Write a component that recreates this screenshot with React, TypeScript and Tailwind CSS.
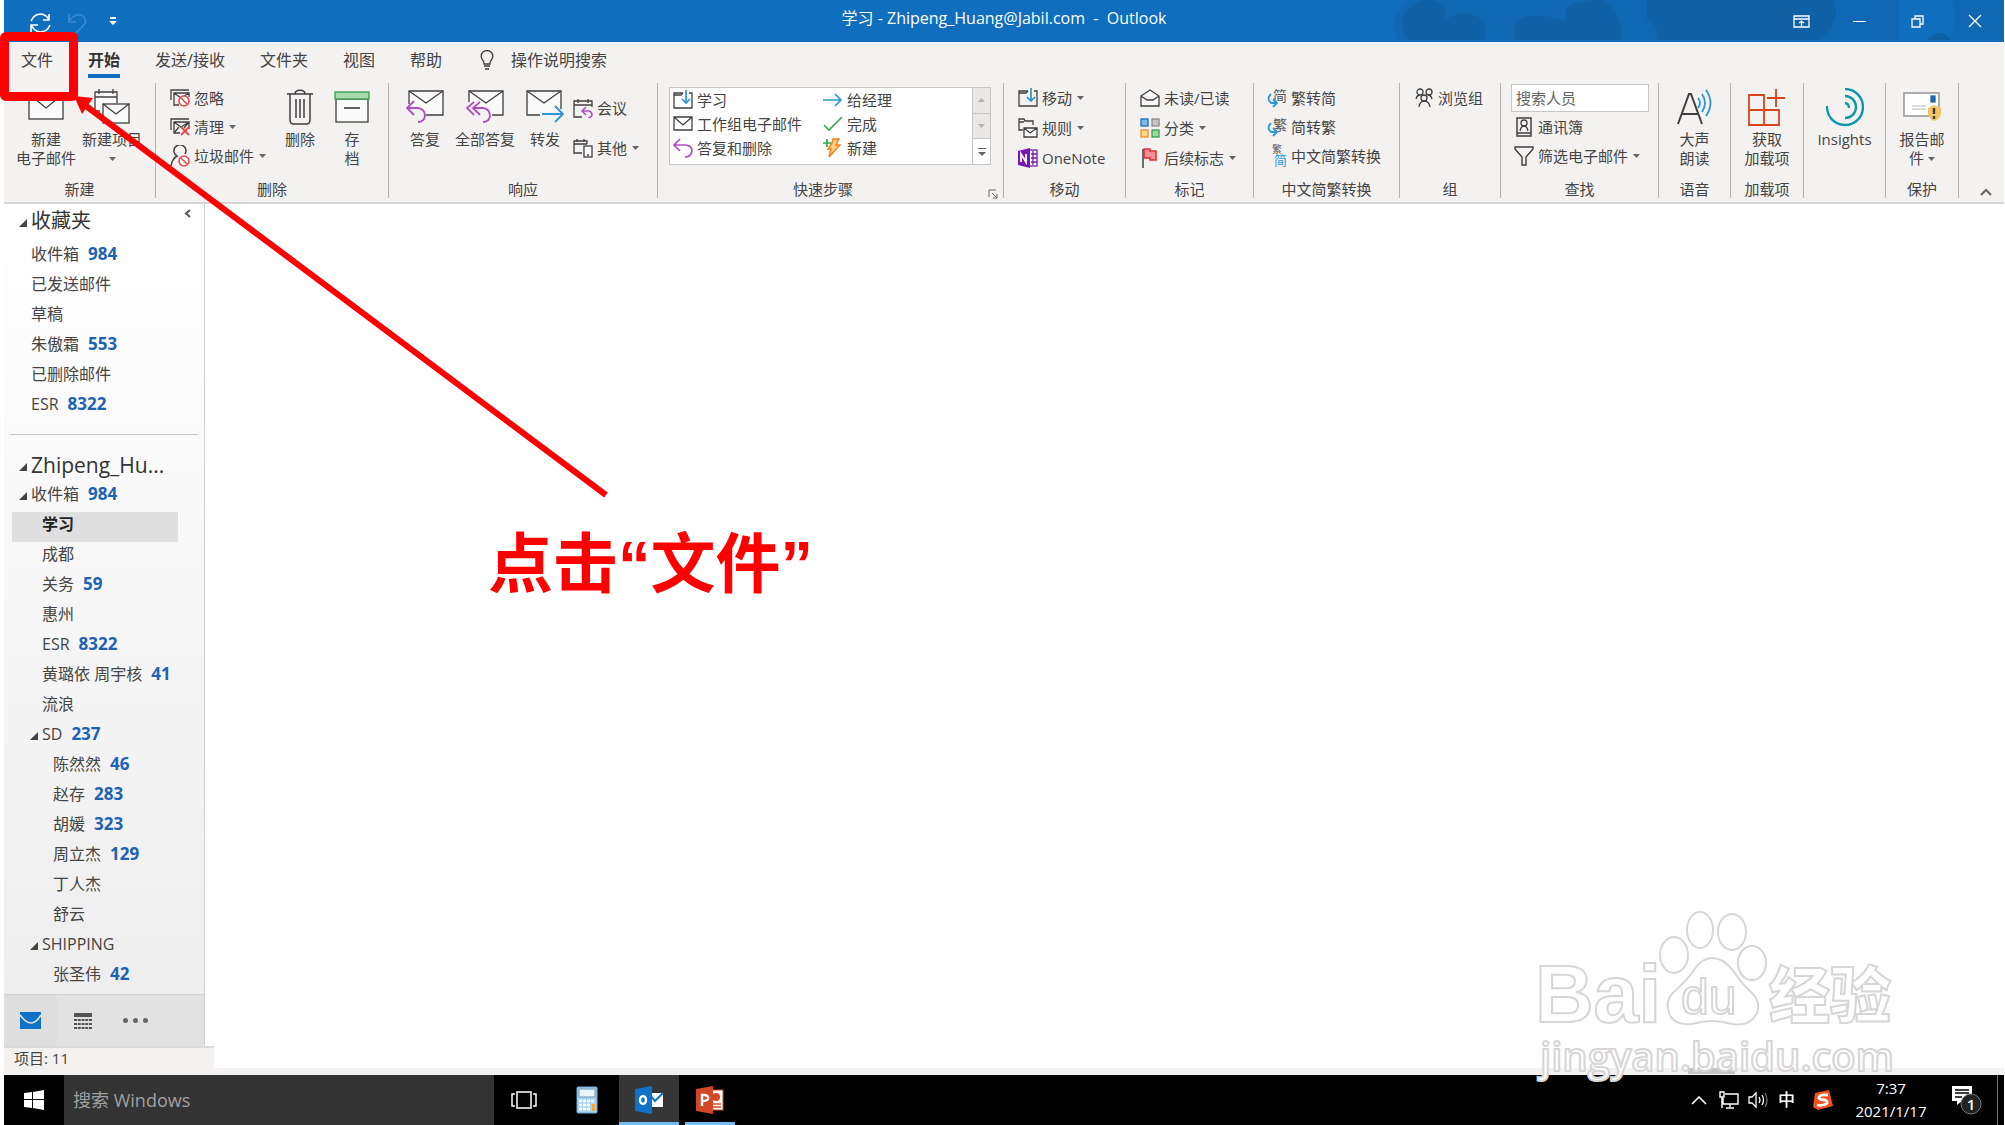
import type { ReactNode } from "react";

const INK = "#3f3f3f";
const BLUE = "#2b95d6";
const PURPLE = "#b04fc0";

type IconProps = { children: ReactNode; w: number; h: number };

function Svg({ children, w, h }: IconProps) {
    return (
        <svg width={w} height={h} viewBox={`0 0 ${w} ${h}`} fill="none" stroke={INK} strokeWidth="1.3" className="shrink-0" aria-hidden="true">
            {children}
        </svg>
    );
}

/* ---------- Large ribbon icons ---------- */

const NewMailIcon = () => (
    <Svg w={36} h={28}>
        <rect x="1" y="1" width="34" height="25" fill="#fafafa" />
        <path d="M1 1L18 15L35 1" />
    </Svg>
);

const NewItemsIcon = () => (
    <Svg w={36} h={36}>
        <path d="M6 22H1V3H23V14" fill="#fafafa" />
        <path d="M1 8H23M5 0V5M19 0V5" />
        <rect x="9" y="15" width="26" height="19" fill="#fafafa" />
        <path d="M9 15L22 25L35 15" />
    </Svg>
);

const TrashIcon = () => (
    <Svg w={28} h={36}>
        <path d="M1 5H27M9 5C9 0 19 0 19 5M4 5V31Q4 35 8 35H20Q24 35 24 31V5M10 10V29M14 10V29M18 10V29" strokeWidth="1.5" />
    </Svg>
);

const ArchiveIcon = () => (
    <Svg w={36} h={32}>
        <rect x="2" y="8" width="32" height="23" fill="#fafafa" />
        <rect x="1" y="1" width="34" height="7" fill="#a5dcae" stroke="#3d9c50" />
        <path d="M10 17H26" strokeWidth="1.6" />
    </Svg>
);

const ReplyIcon = () => (
    <Svg w={38} h={34}>
        <path d="M3 14V1H37V25H20" fill="#fafafa" />
        <path d="M3 1L20 13L37 1" />
        <path d="M8 11L1 18L8 25M1 18H12Q19 19 19 26Q18 32 12 32" stroke={PURPLE} strokeWidth="1.8" />
    </Svg>
);

const ReplyAllIcon = () => (
    <Svg w={38} h={34}>
        <path d="M3 12V1H37V25H26" fill="#fafafa" />
        <path d="M3 1L20 13L37 1" />
        <path d="M8 12L1 18L8 25M14 12L7 18L14 25M7 18H17Q24 19 24 26Q23 32 17 32" stroke={PURPLE} strokeWidth="1.8" />
    </Svg>
);

const ForwardIcon = () => (
    <Svg w={38} h={34}>
        <path d="M14 25H1V1H35V19" fill="#fafafa" />
        <path d="M1 1L18 13L35 1" />
        <path d="M16 24H37M29 16L37 24L29 32" stroke={BLUE} strokeWidth="1.8" />
    </Svg>
);

const ReadAloudIcon = () => (
    <Svg w={36} h={36}>
        <path d="M1 35L12 5H14L25 35M5 25H21" strokeWidth="2" />
        <path d="M21 9Q25 14 21 19M25 5Q31 14 25 23M29 1Q38 14 29 27" stroke={BLUE} strokeWidth="1.8" />
    </Svg>
);

const AddInsIcon = () => (
    <Svg w={38} h={38}>
        <path d="M1 7H16V37H1ZM1 22H31V37H1M28 1V19M19 10H37" stroke="#d9441c" strokeWidth="1.8" />
    </Svg>
);

const InsightsIcon = () => (
    <Svg w={38} h={38}>
        <g stroke="#1096ab" strokeWidth="2.4">
            <path d="M19 1A18 18 0 1 1 1 18" />
            <path d="M19 8A11 11 0 0 1 19 30" />
            <path d="M19 15A5 5 0 0 1 23 20" />
        </g>
    </Svg>
);

const ReportIcon = () => (
    <Svg w={38} h={30}>
        <rect x="1" y="1" width="35" height="23" fill="#fff" stroke="#9a9a9a" strokeWidth="1.6" />
        <rect x="28" y="4" width="4" height="6" fill="#2567b0" stroke="#2567b0" />
        <path d="M9 14H23M9 17H23" stroke="#d0d0d0" />
        <path d="M25 16L31 13L38 16V22Q36 28 31 29Q26 27 25 22Z" fill="#f1c566" stroke="none" />
        <path d="M31 16V22M31 24V27" strokeWidth="2.4" />
    </Svg>
);

/* ---------- Small ribbon icons ---------- */

const IgnoreIcon = () => (
    <Svg w={20} h={20}>
        <path d="M1 12V2H19M9 17H4V5H19V9M4 5L11 10L19 5" />
        <circle cx="14" cy="13" r="5" fill="#fff" stroke="#e5484d" strokeWidth="1.6" />
        <path d="M11 10L17 16" stroke="#e5484d" strokeWidth="1.6" />
    </Svg>
);

const CleanUpIcon = () => (
    <Svg w={20} h={20}>
        <path d="M1 13V2H19M10 16H4V5H19V12M4 5L11 10L19 5M4 16L9 10M19 5L14 11" />
        <path d="M11 10L19 18M19 10L11 18" stroke="#e5484d" strokeWidth="1.8" />
    </Svg>
);

const JunkIcon = () => (
    <Svg w={20} h={22}>
        <path d="M1 21Q2 14 7 11A6 6 0 1 1 15 9" strokeWidth="1.5" />
        <circle cx="14" cy="16" r="5" fill="#fff" stroke="#e5484d" strokeWidth="1.6" />
        <path d="M11 13L17 19" stroke="#e5484d" strokeWidth="1.6" />
    </Svg>
);

const MeetingIcon = () => (
    <Svg w={20} h={20}>
        <path d="M9 19H1V3H19V9M1 7H19M5 1V5M15 1V5" />
        <path d="M13 9L9 13L13 17M9 13H16Q19 14 19 17Q18 20 15 20" stroke={PURPLE} strokeWidth="1.6" />
    </Svg>
);

const MoreIcon = () => (
    <Svg w={20} h={20}>
        <path d="M9 15H1V3H14V6M1 6H14M4 1V4M11 1V4" />
        <rect x="11" y="8" width="8" height="11" fill="#fafafa" />
        <path d="M14 17H16" />
    </Svg>
);

const MoveIcon = () => (
    <Svg w={20} h={20}>
        <path d="M10 3H1V18H19V3H16M1 5H8L10 3" />
        <path d="M13 0V13M9 9L13 13L17 9" stroke={BLUE} strokeWidth="1.7" />
    </Svg>
);

const RulesIcon = () => (
    <Svg w={20} h={20}>
        <path d="M5 12H1V1H6L7 3H15V7M1 4H6" />
        <path d="M6 10H19V19H6ZM6 10L12 15L19 10" fill="#fafafa" />
    </Svg>
);

const MailIcon = () => (
    <Svg w={20} h={16}>
        <path d="M1 1H19V14H1ZM1 1L10 9L19 1" />
    </Svg>
);

const UndoIcon = () => (
    <Svg w={20} h={20}>
        <path d="M7 1L1 7L7 13M1 7H13Q19 8 19 13Q18 19 12 19" stroke={PURPLE} strokeWidth="1.7" />
    </Svg>
);

const ArrowIcon = () => (
    <Svg w={20} h={14}>
        <path d="M0 7H18M12 1L18 7L12 13" stroke={BLUE} strokeWidth="1.7" />
    </Svg>
);

const CheckIcon = () => (
    <Svg w={20} h={16}>
        <path d="M1 9L6 14L19 1" stroke="#35a853" strokeWidth="1.6" />
    </Svg>
);

const BoltIcon = () => (
    <Svg w={20} h={20}>
        <path d="M10 1H16L13 7H17L6 19L8 11H5L9 5Z" fill="#ffd083" stroke="#f08019" strokeWidth="1.4" />
        <path d="M0 5H8M4 1V9" stroke="#35a853" strokeWidth="1.7" />
    </Svg>
);

const OneNoteIcon = () => (
    <Svg w={20} h={20}>
        <rect x="10" y="2" width="9" height="16" fill="#fff" stroke="#7719aa" />
        <path d="M15 3V17M13 6H19M13 10H19M13 14H19" stroke="#7719aa" />
        <path d="M0 3L12 0V20L0 17Z" fill="#7719aa" stroke="none" />
        <path d="M3 14V6L8 14V6" stroke="#fff" strokeWidth="1.8" />
    </Svg>
);

const ReadIcon = () => (
    <Svg w={20} h={18}>
        <path d="M1 7L10 1L19 7V17H1ZM1 7L7 11H13L19 7" fill="#fafafa" />
    </Svg>
);

const CategoryIcon = () => (
    <Svg w={20} h={20}>
        <rect x="1" y="1" width="7" height="7" fill="#7db9ee" stroke="#1f6cb5" />
        <rect x="12" y="1" width="7" height="7" fill="#c8c6c4" stroke="#8a8886" />
        <rect x="1" y="12" width="7" height="7" fill="#ffd68a" stroke="#ee8f2c" />
        <rect x="12" y="12" width="7" height="7" fill="#9bd9a3" stroke="#3d9c50" />
    </Svg>
);

const FlagIcon = () => (
    <Svg w={20} h={20}>
        <path d="M3 1V20" strokeWidth="1.5" />
        <path d="M4 1H10V3H16V12H10V10H4Z" fill="#ff8f94" stroke="#dc3033" strokeWidth="1.6" />
    </Svg>
);

const PeopleIcon = () => (
    <Svg w={18} h={20}>
        <circle cx="5" cy="4" r="3" />
        <circle cx="14" cy="4" r="3" />
        <circle cx="9" cy="10" r="3" fill="#f3f2f1" />
        <path d="M1 11Q2 7 5 7M17 11Q16 7 13 7M4 19Q5 13 9 13Q14 13 15 19" />
    </Svg>
);

const AddressBookIcon = () => (
    <Svg w={16} h={20}>
        <path d="M1 1H15V19H1ZM1 16H15" strokeWidth="1.5" />
        <circle cx="8" cy="6" r="3" />
        <path d="M4 14Q5 9 8 9Q11 9 12 14" />
    </Svg>
);

const FilterIcon = () => (
    <Svg w={20} h={20}>
        <path d="M1 1H19V3L12 11V19H8V11L1 3Z" strokeWidth="1.4" />
    </Svg>
);

/* Chinese conversion icons: a glyph with a blue turning arrow */
function ConvertIcon({ glyph }: { glyph: string }) {
    return (
        <span className="relative block h-5 w-5 shrink-0 text-right text-[14px] leading-4 text-[#555]">
            {glyph}
            <svg width="12" height="15" viewBox="0 0 12 15" fill="none" stroke={BLUE} strokeWidth="1.8" className="absolute bottom-0 left-0" aria-hidden="true">
                <path d="M4 1Q-1 6 4 10H10M6 6L10 10L6 14" />
            </svg>
        </span>
    );
}

const BothConvertIcon = () => (
    <span className="flex w-5 shrink-0 flex-col">
        <span className="text-[10px] leading-2 text-[#555]">繁</span>
        <span className="self-end text-[13px] leading-[14px] text-[#2b95d6]">简</span>
    </span>
);

const Chevron = () => (
    <svg width="7" height="4" viewBox="0 0 7 4" fill="#666" className="shrink-0" aria-hidden="true">
        <path d="M0 0H7L3.5 4Z" />
    </svg>
);

/* ---------- Ribbon building blocks ---------- */

type GroupProps = { label: string; width: string; children?: ReactNode; launcher?: boolean };

function Group({ label, width, children, launcher }: GroupProps) {
    return (
        <section className={`flex h-[115px] shrink-0 flex-col border-r border-[#b5b3b1] ${width}`}>
            <div className="flex h-24 shrink-0">{children}</div>
            <div className="flex h-5 items-center">
                <h2 className="flex-1 text-center text-[15px] leading-5">{label}</h2>
                {launcher && (
                    <button aria-label="更多设置" className="mr-[5px] self-end">
                        <svg width="10" height="10" viewBox="0 0 10 10" fill="none" stroke="#666" aria-hidden="true">
                            <path d="M1 8V1H8M4 4L9 9M9 5V9H5" />
                        </svg>
                    </button>
                )}
            </div>
        </section>
    );
}

type BigButtonProps = { icon: ReactNode; lines: string[]; width: string; arrow?: boolean };

function BigButton({ icon, lines, width, arrow }: BigButtonProps) {
    return (
        <button className={`flex shrink-0 flex-col items-center text-[15px] leading-[19px] whitespace-nowrap ${width}`}>
            <span className="flex h-[47px] items-center justify-center">{icon}</span>
            {lines.map((line, i) => (
                <span key={line} className="flex items-center gap-1">
                    {line}
                    {arrow && i === lines.length - 1 && i > 0 && <Chevron />}
                </span>
            ))}
            {arrow && lines.length === 1 && (
                <span className="flex h-[19px] items-center">
                    <Chevron />
                </span>
            )}
        </button>
    );
}

type SmallButtonProps = { icon: ReactNode; label: string; arrow?: boolean; height?: string };

function SmallButton({ icon, label, arrow, height = "h-[29px]" }: SmallButtonProps) {
    return (
        <button className={`flex items-center gap-1 text-[15px] leading-5 whitespace-nowrap ${height}`}>
            <span className="flex w-5 justify-center">{icon}</span>
            {label}
            {arrow && <span className="pl-px"><Chevron /></span>}
        </button>
    );
}

const tabs = ["文件", "开始", "发送/接收", "文件夹", "视图", "帮助"];

function TitleBar() {
    return (
        <header className="relative grid h-[42px] shrink-0 grid-cols-[1fr_auto_1fr] items-center bg-[#106ebe] text-white">
            <svg width="625" height="40" viewBox="0 0 625 40" className="absolute top-0 right-0" aria-hidden="true">
                <rect width="625" height="40" fill="#1068b4" />
                <path d="M0 0H30Q8 15 18 40H0ZM520 0H625V40H520Z" fill="#106ebe" />
                <g fill="#0f60a4">
                    <path d="M45 0Q22 6 23 26Q24 34 30 40H105Q112 18 90 14Q78 12 66 20Q70 0 45 0Z" />
                    <path d="M187 8Q200 0 222 0Q244 12 242 40H136Q132 18 150 16Q165 14 187 22Z" />
                    <path d="M268 0H455Q463 20 440 40H276Q284 28 268 20Z" />
                    <path d="M548 40Q560 26 573 40Z" />
                </g>
                <path d="M573 0Q580 20 570 40H625V0Z" fill="#1068b4" />
            </svg>
            <div className="flex h-full items-center pl-[26px]">
                <button aria-label="发送/接收所有文件夹" className="pt-1">
                    <svg width="21" height="20" viewBox="0 0 21 20" fill="none" stroke="#fff" strokeWidth="1.6" aria-hidden="true">
                        <path d="M1 8Q4 1 11 1Q17 2 19 7M19 1V7H13M20 12Q17 19 10 19Q4 18 2 13M1 19V12H8" />
                    </svg>
                </button>
                <button aria-label="撤消" className="ml-[17px] pt-1">
                    <svg width="19" height="20" viewBox="0 0 19 20" fill="none" stroke="#3a8ad0" strokeWidth="1.6" aria-hidden="true">
                        <path d="M1 1V9H8M1 8Q8 -1 15 3Q20 8 15 13L8 20" />
                    </svg>
                </button>
                <button aria-label="自定义快速访问工具栏" className="ml-[22px]">
                    <svg width="8" height="8" viewBox="0 0 8 8" fill="#fff" aria-hidden="true">
                        <path d="M1 0H7V2H1ZM0 4H8L4 8Z" />
                    </svg>
                </button>
            </div>
            <h1 className="relative pb-[6px] text-[16px] leading-5 whitespace-pre">学习 - Zhipeng_Huang@Jabil.com  -  Outlook</h1>
            <div className="relative flex h-full justify-end">
                <button aria-label="功能区显示选项" className="flex w-[58px] items-center justify-center">
                    <svg width="17" height="13" viewBox="0 0 17 13" fill="none" stroke="#fff" strokeWidth="1.3" aria-hidden="true">
                        <path d="M1 1H16V12H1ZM1 4H16M8.500 11V6M6 8L8.500 6L11 8" />
                    </svg>
                </button>
                <button aria-label="最小化" className="flex w-[58px] items-center justify-center">
                    <span className="h-px w-[13px] bg-white" />
                </button>
                <button aria-label="向下还原" className="flex w-[58px] items-center justify-center">
                    <svg width="13" height="13" viewBox="0 0 13 13" fill="none" stroke="#fff" strokeWidth="1.3" aria-hidden="true">
                        <path d="M1 4H9V12H1ZM4 4V1H12V9H9" />
                    </svg>
                </button>
                <button aria-label="关闭" className="flex w-[58px] items-center justify-center">
                    <svg width="14" height="14" viewBox="0 0 14 14" fill="none" stroke="#fff" strokeWidth="1.3" aria-hidden="true">
                        <path d="M1 1L13 13M13 1L1 13" />
                    </svg>
                </button>
            </div>
        </header>
    );
}

function TabRow() {
    return (
        <nav className="flex h-[41px] shrink-0 items-start gap-[35px] pt-1 pl-[17px] text-[16px] leading-7">
            {tabs.map((tab) => (
                <button
                    key={tab}
                    className={tab === "开始" ? "border-b-4 border-[#106ebe] font-bold text-[#333]" : ""}
                >
                    {tab}
                </button>
            ))}
            <button className="flex items-center gap-[17px] pl-[3px]">
                <svg width="14" height="20" viewBox="0 0 14 20" fill="none" stroke={INK} strokeWidth="1.3" aria-hidden="true">
                    <path d="M4 14Q4 11 2 9Q0 5 3 2Q7 -1 11 2Q14 5 12 9Q10 11 10 14ZM4 16H10M5 19H9" />
                </svg>
                操作说明搜索
            </button>
        </nav>
    );
}

const quickSteps = [
    { icon: <MoveIcon />, label: "学习" },
    { icon: <ArrowIcon />, label: "给经理" },
    { icon: <MailIcon />, label: "工作组电子邮件" },
    { icon: <CheckIcon />, label: "完成" },
    { icon: <UndoIcon />, label: "答复和删除" },
    { icon: <BoltIcon />, label: "新建" },
];

function Ribbon() {
    return (
        <div className="flex h-[121px] shrink-0 border-b-2 border-[#d8d6d4]">
            <Group label="新建" width="w-[152px]">
                <BigButton icon={<NewMailIcon />} lines={["新建", "电子邮件"]} width="ml-2 w-[68px]" />
                <BigButton icon={<NewItemsIcon />} lines={["新建项目"]} width="w-[64px]" arrow />
            </Group>

            <Group label="删除" width="w-[233px]">
                <div className="ml-[14px] w-[106px]">
                    <SmallButton icon={<IgnoreIcon />} label="忽略" />
                    <SmallButton icon={<CleanUpIcon />} label="清理" arrow />
                    <SmallButton icon={<JunkIcon />} label="垃圾邮件" arrow />
                </div>
                <BigButton icon={<TrashIcon />} lines={["删除"]} width="w-[48px]" />
                <BigButton icon={<ArchiveIcon />} lines={["存", "档"]} width="ml-1 w-[48px]" />
            </Group>

            <Group label="响应" width="w-[269px]">
                <BigButton icon={<ReplyIcon />} lines={["答复"]} width="ml-2 w-[56px]" />
                <BigButton icon={<ReplyAllIcon />} lines={["全部答复"]} width="w-[64px]" />
                <BigButton icon={<ForwardIcon />} lines={["转发"]} width="w-[56px]" />
                <div className="pt-[5px]">
                    <SmallButton icon={<MeetingIcon />} label="会议" height="h-10" />
                    <SmallButton icon={<MoreIcon />} label="其他" arrow height="h-10" />
                </div>
            </Group>

            <Group label="快速步骤" width="w-[346px]" launcher>
                <div className="mt-1 ml-[11px] flex h-[78px] w-[322px] border border-[#c8c6c4] bg-white">
                    <div className="grid flex-1 grid-cols-[150px_1fr] content-start pl-[3px]">
                        {quickSteps.map((step) => (
                            <SmallButton key={step.label} icon={step.icon} label={step.label} height="h-6" />
                        ))}
                    </div>
                    <div className="flex w-[18px] flex-col border-l border-[#c8c6c4]">
                        <button aria-label="上一行" className="flex flex-1 items-center justify-center border-b border-[#c8c6c4] bg-[#e9e8e7]">
                            <svg width="7" height="4" viewBox="0 0 7 4" fill="#b5b3b1" aria-hidden="true"><path d="M0 4H7L3.500 0Z" /></svg>
                        </button>
                        <button aria-label="下一行" className="flex flex-1 items-center justify-center border-b border-[#c8c6c4] bg-[#e9e8e7]">
                            <svg width="7" height="4" viewBox="0 0 7 4" fill="#b5b3b1" aria-hidden="true"><path d="M0 0H7L3.500 4Z" /></svg>
                        </button>
                        <button aria-label="更多" className="flex flex-1 items-center justify-center">
                            <svg width="8" height="8" viewBox="0 0 8 8" fill="#666" aria-hidden="true"><path d="M0 0H8V1H0ZM0 4H8L4 8Z" /></svg>
                        </button>
                    </div>
                </div>
            </Group>

            <Group label="移动" width="w-[122px]">
                <div className="ml-[14px]">
                    <SmallButton icon={<MoveIcon />} label="移动" arrow height="h-[30px]" />
                    <SmallButton icon={<RulesIcon />} label="规则" arrow height="h-[30px]" />
                    <SmallButton icon={<OneNoteIcon />} label="OneNote" height="h-[30px]" />
                </div>
            </Group>

            <Group label="标记" width="w-[128px]">
                <div className="ml-[14px]">
                    <SmallButton icon={<ReadIcon />} label="未读/已读" height="h-[30px]" />
                    <SmallButton icon={<CategoryIcon />} label="分类" arrow height="h-[30px]" />
                    <SmallButton icon={<FlagIcon />} label="后续标志" arrow height="h-[30px]" />
                </div>
            </Group>

            <Group label="中文简繁转换" width="w-[146px]">
                <div className="ml-[13px]">
                    <SmallButton icon={<ConvertIcon glyph="简" />} label="繁转简" />
                    <SmallButton icon={<ConvertIcon glyph="繁" />} label="简转繁" />
                    <SmallButton icon={<BothConvertIcon />} label="中文简繁转换" />
                </div>
            </Group>

            <Group label="组" width="w-[101px]">
                <div className="ml-[14px]">
                    <SmallButton icon={<PeopleIcon />} label="浏览组" />
                </div>
            </Group>

            <Group label="查找" width="w-[158px]">
                <div className="ml-[10px] pt-px">
                    <input
                        aria-label="搜索人员"
                        placeholder="搜索人员"
                        className="block h-7 w-[138px] border border-[#c8c6c4] bg-white px-1 text-[15px] leading-5 placeholder:text-[#666]"
                    />
                    <div className="pl-[3px]">
                        <SmallButton icon={<AddressBookIcon />} label="通讯簿" />
                        <SmallButton icon={<FilterIcon />} label="筛选电子邮件" arrow />
                    </div>
                </div>
            </Group>

            <Group label="语音" width="w-[72px]">
                <BigButton icon={<ReadAloudIcon />} lines={["大声", "朗读"]} width="w-full" />
            </Group>
            <Group label="加载项" width="w-[73px]">
                <BigButton icon={<AddInsIcon />} lines={["获取", "加载项"]} width="w-full" />
            </Group>
            <Group label="" width="w-[82px]">
                <BigButton icon={<InsightsIcon />} lines={["Insights"]} width="w-full" />
            </Group>
            <Group label="保护" width="w-[73px]">
                <BigButton icon={<ReportIcon />} lines={["报告邮", "件"]} width="w-full" arrow />
            </Group>

            <div className="flex flex-1 items-end justify-end pr-3 pb-[6px]">
                <button aria-label="折叠功能区">
                    <svg width="12" height="8" viewBox="0 0 12 8" fill="none" stroke="#666" strokeWidth="2" aria-hidden="true">
                        <path d="M1 7L6 2L11 7" />
                    </svg>
                </button>
            </div>
        </div>
    );
}

type Folder = { name: string; count?: number; level: number; open?: boolean; selected?: boolean };

const favorites: Folder[] = [
    { name: "收件箱", count: 984, level: 0 },
    { name: "已发送邮件", level: 0 },
    { name: "草稿", level: 0 },
    { name: "朱傲霜", count: 553, level: 0 },
    { name: "已删除邮件", level: 0 },
    { name: "ESR", count: 8322, level: 0 },
];

const folders: Folder[] = [
    { name: "收件箱", count: 984, level: 0, open: true },
    { name: "学习", level: 1, selected: true },
    { name: "成都", level: 1 },
    { name: "关务", count: 59, level: 1 },
    { name: "惠州", level: 1 },
    { name: "ESR", count: 8322, level: 1 },
    { name: "黄璐依 周宇核", count: 41, level: 1 },
    { name: "流浪", level: 1 },
    { name: "SD", count: 237, level: 1, open: true },
    { name: "陈然然", count: 46, level: 2 },
    { name: "赵存", count: 283, level: 2 },
    { name: "胡媛", count: 323, level: 2 },
    { name: "周立杰", count: 129, level: 2 },
    { name: "丁人杰", level: 2 },
    { name: "舒云", level: 2 },
    { name: "SHIPPING", level: 1, open: true },
    { name: "张圣伟", count: 42, level: 2 },
];

const indent = ["pl-[5px]", "pl-4", "pl-[27px]"];

function Triangle({ show }: { show?: boolean }) {
    return (
        <span className="flex h-6 w-[14px] shrink-0 items-center pt-[3px] pl-[2px]">
            {show && (
                <svg width="8" height="8" viewBox="0 0 8 8" fill="#444" aria-hidden="true">
                    <path d="M8 0V8H0Z" />
                </svg>
            )}
        </span>
    );
}

function FolderList({ items }: { items: Folder[] }) {
    return (
        <ul className="ml-2 w-[166px]">
            {items.map((f) => (
                <li key={f.name} className={f.selected ? "bg-[#dfdfdf]" : ""}>
                    <button className={`flex h-[30px] w-full items-start text-[16px] leading-6 whitespace-nowrap ${indent[f.level]}`}>
                        <Triangle show={f.open} />
                        <span className={f.selected ? "font-bold text-[#222]" : ""}>{f.name}</span>
                        {f.count && <span className="pl-[9px] text-[17px] font-bold text-[#1e62b4]">{f.count}</span>}
                    </button>
                </li>
            ))}
        </ul>
    );
}

function Sidebar() {
    return (
        <aside className="flex w-[201px] shrink-0 flex-col border-r border-[#d0d0d0] bg-linear-to-b from-white to-[#ededed]">
            <div className="flex h-[38px] shrink-0 items-start pt-[5px] pl-[13px]">
                <Triangle show />
                <h2 className="flex-1 text-[20px] leading-6 text-[#333]">收藏夹</h2>
                <button aria-label="折叠文件夹窗格" className="pr-[13px]">
                    <svg width="7" height="9" viewBox="0 0 7 9" fill="none" stroke="#555" strokeWidth="2" aria-hidden="true">
                        <path d="M6 1L2 4.500L6 8" />
                    </svg>
                </button>
            </div>
            <FolderList items={favorites} />
            <hr className="mx-[6px] mt-3 border-[#c8c8c8]" />
            <div className="mt-[18px] flex h-[29px] shrink-0 items-start pl-[13px]">
                <Triangle show />
                <h2 className="text-[21px] leading-6 text-[#333]">Zhipeng_Hu...</h2>
            </div>
            <FolderList items={folders} />
            <div className="mt-auto flex h-[52px] shrink-0 border-t border-[#cfcfcf] bg-[#e2e2e2]">
                <button aria-label="邮件" className="flex w-[53px] items-center justify-center bg-[#dedede]">
                    <svg width="21" height="17" viewBox="0 0 21 17" aria-hidden="true">
                        <rect width="21" height="17" fill="#0f72c6" />
                        <path d="M0 3Q6 11 11 11Q16 11 21 3" fill="none" stroke="#e2e2e2" strokeWidth="1.6" />
                    </svg>
                </button>
                <button aria-label="日历" className="flex w-[52px] items-center justify-center">
                    <svg width="18" height="16" viewBox="0 0 18 16" aria-hidden="true">
                        <rect width="18" height="4" fill="#555" />
                        <path d="M0 7H18M0 11H18M0 15H18" stroke="#555" strokeWidth="2" strokeDasharray="3 0.75" />
                    </svg>
                </button>
                <button aria-label="更多选项" className="flex w-[52px] items-center justify-center gap-[5px]">
                    <span className="size-[5px] rounded-full bg-[#666]" />
                    <span className="size-[5px] rounded-full bg-[#666]" />
                    <span className="size-[5px] rounded-full bg-[#666]" />
                </button>
            </div>
        </aside>
    );
}

function Watermark() {
    return (
        <svg
            width="370"
            height="190"
            viewBox="0 0 370 190"
            className="pointer-events-none absolute right-[103px] bottom-[41px]"
            fill="#fff"
            stroke="#d6d6d6"
            strokeWidth="2"
            aria-hidden="true"
        >
            <text x="3" y="128" fontFamily="Liberation Sans" fontWeight="bold" fontSize="81">Bai</text>
            <ellipse cx="142" cy="61" rx="14" ry="18" />
            <ellipse cx="168" cy="36" rx="13" ry="18" />
            <ellipse cx="200" cy="38" rx="14" ry="18" />
            <ellipse cx="220" cy="69" rx="14" ry="17" />
            <path d="M180 64Q192 64 202 78Q210 90 220 99Q229 108 225 119Q218 133 200 130Q180 124 160 130Q138 132 136 114Q134 104 144 96Q155 86 162 76Q170 64 180 64Z" />
            <text x="149" y="120" fontFamily="Liberation Sans" fontSize="50">du</text>
            <text x="237" y="124" fontFamily="Noto Sans CJK SC" fontWeight="900" fontSize="61">经验</text>
            <text x="8" y="177" fontFamily="Open Sans" fontWeight="600" fontSize="40">jingyan.baidu.com</text>
        </svg>
    );
}

function Taskbar() {
    return (
        <footer className="flex h-[50px] shrink-0 bg-black text-white">
            <button aria-label="开始菜单" className="flex w-[60px] items-center justify-center">
                <svg width="20" height="20" viewBox="0 0 20 20" fill="#fff" aria-hidden="true">
                    <path d="M0 3L8 2V9H0ZM9 2L20 0V9H9ZM0 10H8V18L0 17ZM9 10H20V20L9 18Z" />
                </svg>
            </button>
            <input
                aria-label="搜索 Windows"
                placeholder="搜索 Windows"
                className="w-[430px] bg-[#333] px-[9px] text-[18px] placeholder:text-[#a0a0a0]"
            />
            <button aria-label="任务视图" className="flex w-[60px] items-center justify-center">
                <svg width="26" height="18" viewBox="0 0 26 18" fill="none" stroke="#fff" strokeWidth="1.5" aria-hidden="true">
                    <path d="M6 1H20V17H6ZM4 3H1V15H4M22 3H25V15H22" />
                </svg>
            </button>
            <button aria-label="计算器" className="flex w-[65px] items-center justify-center">
                <svg width="22" height="28" viewBox="0 0 22 28" aria-hidden="true">
                    <rect x="1" y="1" width="20" height="26" rx="1" fill="#a9d3ee" stroke="#6aa9d4" />
                    <rect x="3" y="3" width="16" height="8" fill="#e9f5fc" stroke="#6b98b8" />
                    <path d="M3 15H19M3 19H15M3 23H15" stroke="#fff" strokeWidth="2.500" strokeDasharray="3 1" />
                    <rect x="16" y="18" width="3" height="7" fill="#f3a63b" />
                </svg>
            </button>
            <button aria-label="Outlook" className="flex w-[60px] items-center justify-center border-b-3 border-[#76b9ed] bg-[#363636] pt-[3px]">
                <svg width="28" height="28" viewBox="0 0 28 28" aria-hidden="true">
                    <rect x="14" y="7" width="14" height="14" fill="#fff" />
                    <path d="M14 8L20 15L28 7" fill="none" stroke="#0f72c6" strokeWidth="2" />
                    <path d="M0 3L17 0V28L0 25Z" fill="#0f72c6" />
                    <ellipse cx="8" cy="14" rx="3" ry="4" fill="none" stroke="#fff" strokeWidth="2.400" />
                </svg>
            </button>
            <button aria-label="PowerPoint" className="ml-[6px] flex w-[50px] items-center justify-center border-b-3 border-[#76b9ed] pt-[3px]">
                <svg width="28" height="28" viewBox="0 0 28 28" aria-hidden="true">
                    <rect x="14" y="4" width="13" height="20" fill="#fff" stroke="#d24726" />
                    <circle cx="20" cy="11" r="4" fill="#d24726" />
                    <path d="M17 18H25M17 21H25" stroke="#d24726" strokeWidth="1.500" />
                    <path d="M0 3L17 0V28L0 25Z" fill="#d24726" />
                    <path d="M6 20V9H9Q13 10 12 13Q11 15 6 15" fill="none" stroke="#fff" strokeWidth="2.400" />
                </svg>
            </button>

            <div className="ml-auto flex items-center">
                <button aria-label="显示隐藏的图标">
                    <svg width="16" height="9" viewBox="0 0 16 9" fill="none" stroke="#fff" strokeWidth="1.600" aria-hidden="true">
                        <path d="M1 8L8 1L15 8" />
                    </svg>
                </button>
                <button aria-label="网络" className="ml-3">
                    <svg width="20" height="18" viewBox="0 0 20 18" fill="none" stroke="#fff" strokeWidth="1.400" aria-hidden="true">
                        <path d="M6 3H19V13H4V7M1 1H5V6H1ZM3 6V17M11 13V16M7 17H15" />
                    </svg>
                </button>
                <button aria-label="音量" className="ml-[9px]">
                    <svg width="20" height="18" viewBox="0 0 20 18" fill="none" stroke="#fff" strokeWidth="1.300" aria-hidden="true">
                        <path d="M1 6H4L8 2V16L4 12H1ZM11 6Q13 9 11 12M14 4Q17 9 14 14" />
                        <path d="M17 2Q21 9 17 16" stroke="#777" />
                    </svg>
                </button>
                <button className="ml-[10px] text-[17px] font-medium leading-6">中</button>
                <button aria-label="搜狗输入法" className="ml-[18px]">
                    <svg width="20" height="20" viewBox="0 0 20 20" aria-hidden="true">
                        <path d="M2 3L16 0L20 16L5 20L0 17Z" fill="#f4511e" />
                        <path d="M15 5Q6 4 6 8Q7 10 12 10Q16 12 13 14Q9 16 4 15" fill="none" stroke="#fff" strokeWidth="2.800" />
                    </svg>
                </button>
                <button className="ml-5 w-[76px] text-center text-[15px] leading-[23px]">
                    7:37
                    <br />
                    2021/1/17
                </button>
                <button aria-label="操作中心" className="relative ml-[23px] h-[30px] w-[30px]">
                    <svg width="30" height="30" viewBox="0 0 30 30" aria-hidden="true">
                        <path d="M0 1H20V16H10L5 20V16H0Z" fill="#fff" />
                        <path d="M3 5H17M3 8H17M3 12H10" stroke="#000" strokeWidth="1.300" />
                        <circle cx="19" cy="19" r="10" fill="#222" stroke="#777" />
                    </svg>
                    <span className="absolute right-[6px] bottom-[2px] w-[10px] text-center text-[15px] font-semibold leading-[18px]">1</span>
                </button>
                <span className="ml-[15px] h-[50px] w-px bg-[#777]" />
                <span className="w-[6px]" />
            </div>
        </footer>
    );
}

export default function App() {
    return (
        <div className="relative flex h-screen min-h-[1125px] flex-col overflow-hidden bg-white pr-px pl-1 font-['Open_Sans','Noto_Sans_CJK_SC',sans-serif] text-[#444]">
            <TitleBar />
            <div className="flex shrink-0 flex-col bg-[#f3f2f1]">
                <TabRow />
                <Ribbon />
            </div>

            <div className="flex min-h-0 flex-1">
                <Sidebar />
                <main className="flex-1 bg-white" />
            </div>

            <div className="w-[210px] shrink-0 border-t-2 border-[#dad9d7] bg-[#f3f2f1] pl-[10px] text-[15px] leading-5">项目: 11</div>
            <div className="flex h-[7px] shrink-0 justify-end bg-[#f3f2f1] pr-[269px]">
                <span className="h-[6px] w-[47px] bg-[#c4c4c4]" />
            </div>
            <Taskbar />
            <Watermark />

            {/* Annotation: box around the File tab, arrow and caption */}
            <div className="pointer-events-none absolute top-8 left-0 h-[69px] w-[78px] rounded-md border-[9px] border-[#ff0000]" />
            <svg width="620" height="510" viewBox="0 0 620 510" className="pointer-events-none absolute top-0 left-0" aria-hidden="true">
                <path d="M606 495L86 106" stroke="#ff0000" strokeWidth="6" />
                <path d="M74 96L93 98L82 114Z" fill="#ff0000" />
            </svg>
            <p className="absolute top-[517px] left-[488px] font-['Liberation_Sans','Noto_Sans_CJK_SC',sans-serif] text-[65px] leading-[96px] font-bold whitespace-nowrap text-[#ff0000]">
                点击“文件”
            </p>
        </div>
    );
}
